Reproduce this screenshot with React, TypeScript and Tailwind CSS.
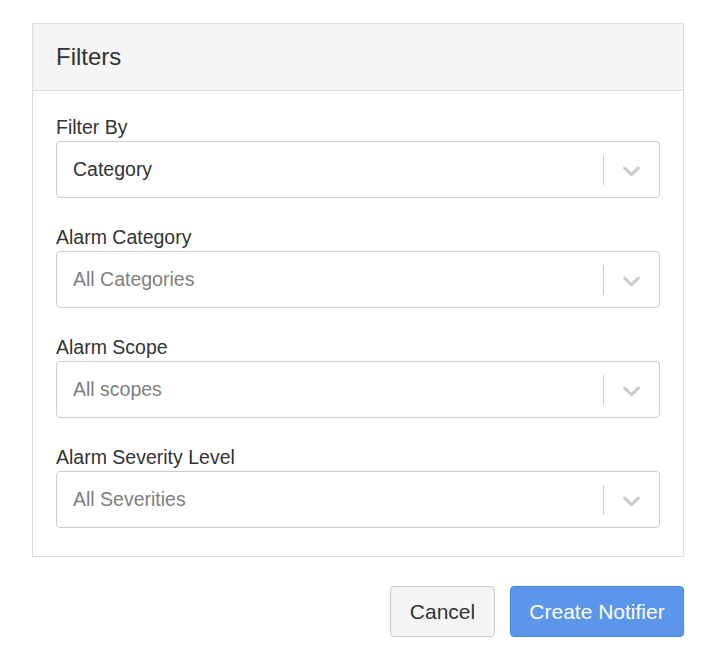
import React from 'react';

interface FilterField {
  label: string;
  value: string;
  placeholder?: boolean;
}

const fields: FilterField[] = [
  { label: 'Filter By', value: 'Category' },
  { label: 'Alarm Category', value: 'All Categories', placeholder: true },
  { label: 'Alarm Scope', value: 'All scopes', placeholder: true },
  { label: 'Alarm Severity Level', value: 'All Severities', placeholder: true },
];

function Chevron() {
  return (
    <svg viewBox="0 0 20 20" className="h-[29px] w-[29px] fill-[#cccccc]" aria-hidden="true">
      <path d="M4.516 7.548c0.436-0.446 1.043-0.481 1.576 0l3.908 3.747 3.908-3.747c0.533-0.481 1.141-0.446 1.574 0 0.436 0.445 0.408 1.197 0 1.615-0.406 0.418-4.695 4.502-4.695 4.502-0.217 0.223-0.502 0.335-0.787 0.335s-0.57-0.112-0.789-0.335c0 0-4.287-4.084-4.695-4.502s-0.436-1.17 0-1.615z" />
    </svg>
  );
}

function SelectBox({ field }: { field: FilterField }) {
  return (
    <div className="flex h-[57px] items-center rounded-[4px] border border-[#cccccc] bg-white">
      <span
        className={`flex-1 pl-[16px] text-[19.5px] ${field.placeholder ? 'text-[#808080]' : 'text-[#333333]'}`}
      >
        {field.value}
      </span>
      <span className="h-[30px] w-px bg-[#cccccc]" />
      <span className="flex w-[55px] justify-center pt-[2px]">
        <Chevron />
      </span>
    </div>
  );
}

export default function App() {
  return (
    <div
      className="min-h-[663px] w-[718px] bg-white pt-[23px] pl-[32px]"
      style={{ fontFamily: '"Liberation Sans", Arial, sans-serif' }}
    >
      <div className="w-[652px]">
        {/* Filters panel */}
        <div className="border border-[#dddddd] bg-white">
          <div className="flex h-[67px] items-center border-b border-[#dddddd] bg-[#f5f5f5] px-[23px]">
            <h2 className="text-[24px] text-[#333333]">Filters</h2>
          </div>
          <div className="flex flex-col gap-[26px] px-[23px] pt-[23px] pb-[28px]">
            {fields.map(field => (
              <div key={field.label}>
                <label className="block text-[19.5px] leading-[27px] text-[#333333]">{field.label}</label>
                <SelectBox field={field} />
              </div>
            ))}
          </div>
        </div>

        {/* Actions */}
        <div className="mt-[29px] flex justify-end gap-[15px]">
          <button
            type="button"
            className="h-[51px] w-[105px] rounded-[4px] border border-[#cccccc] bg-[#f5f5f5] text-[21px] text-[#333333]"
          >
            Cancel
          </button>
          <button
            type="button"
            className="h-[51px] w-[174px] rounded-[4px] border border-[#4a86e3] bg-[#5b96ea] text-[21px] text-white"
          >
            Create Notifier
          </button>
        </div>
      </div>
    </div>
  );
}
